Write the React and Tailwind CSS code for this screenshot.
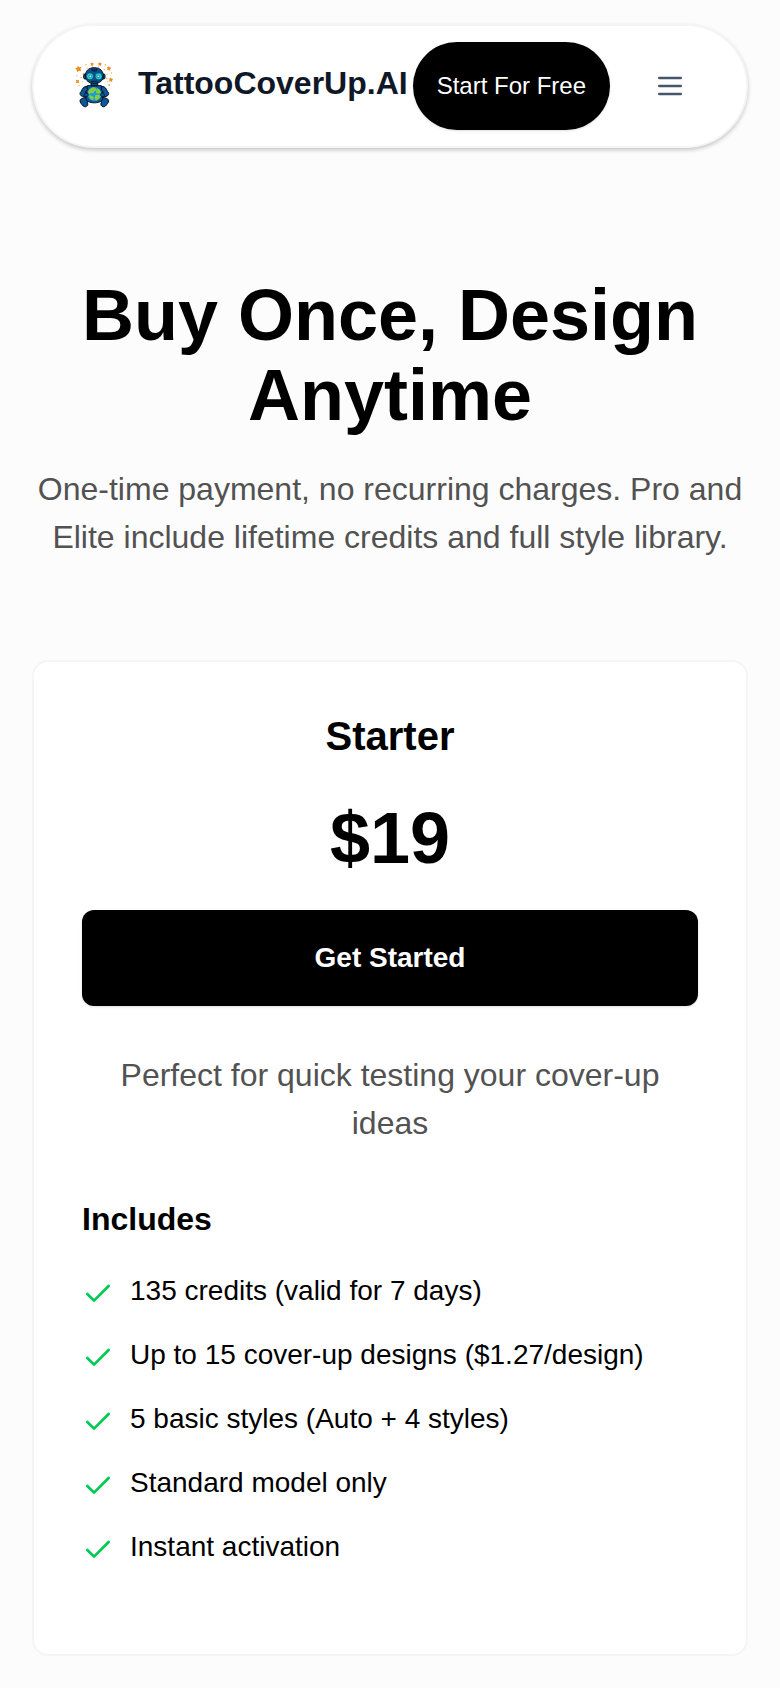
import { Check } from "lucide-react";

const FEATURES = [
    "135 credits (valid for 7 days)",
    "Up to 15 cover-up designs ($1.27/design)",
    "5 basic styles (Auto + 4 styles)",
    "Standard model only",
    "Instant activation",
];

const Logo = () => (
    <svg width="56" height="56" viewBox="3 9 168 168" aria-hidden="true" className="shrink-0">
        {/* sparks */}
        <g fill="#f08a1d">
            <path d="M38 32l5 5 7-1-4 6 3 7-7-2-6 4-1-7-5-5 7-1z" />
            <path d="M80 22l3 3 4 1-3 3 1 4-4-2-4 1 1-4-2-3 4-1z" />
            <path d="M105 21l2 4 4 1-3 3-1 5-3-4-5 1 2-4-2-3 4 0z" />
            <path d="M131 32l3 5 5 1-4 4 1 5-5-2-5 1 2-5-3-4 5-1z" />
            <path d="M137 67l3 4 5 1-4 4 1 5-5-2-5 1 2-5-3-4 5-1z" />
            <path d="M32 74l5 2 5-2-1 5 2 5-5-1-5 1 1-5z" />
        </g>
        <g fill="#f7b267">
            <path d="M53 54h4v5h-4zM61 27h4v4h-4zM65 38h3v4h-3zM47 66h4v4h-4zM34 60h3v4h-3zM50 78h3v3h-3zM40 90h4v4h-4z" />
            <path d="M119 28h4v4h-4zM116 42h4v4h-4zM124 56h4v4h-4zM138 52h3v4h-3zM123 68h4v5h-4zM127 78h3v3h-3zM130 88h5v5h-5z" />
        </g>
        {/* antennae */}
        <path d="M81 31l3 9M103 31l-4 9" stroke="#e5a564" strokeWidth="2" />
        {/* legs */}
        <g fill="#0d589a" stroke="#05101c" strokeWidth="3">
            <path d="M68 129c-8-3-16 0-22 5-3 4 1 10 5 15 4 6 10 8 14 5 5-4 4-9 1-13l8-6z" />
            <path d="M108 129c8-3 16 0 22 5 3 4-1 10-5 15-4 6-10 8-14 5-5-4-4-9-1-13l-8-6z" />
        </g>
        {/* torso and arms */}
        <g fill="#0d589a" stroke="#05101c" strokeWidth="3">
            <path d="M67 92h42l7 20-4 24c-12 10-36 10-48 0l-4-24z" />
            <path d="M66 94c-11 0-14 8-17 15-5 3-5 10-1 13 6 3 13 5 18 3l6-9-11-4 6-8z" />
            <path d="M110 94c11 0 14 8 17 15 5 3 5 10 1 13-6 3-13 5-18 3l-6-9 11-4-6-8z" />
        </g>
        {/* globe */}
        <circle cx="88" cy="117" r="21" fill="#1a9bdc" />
        <path
            d="M73 103l11-6 8 2 4 6-8 4-3 6-7-1-4 4-5-6zM97 100l8 6 3 9-9 1-7-3 2-6zM71 120l11 3 5 5-3 7-8-3zM91 120l12-1 4 4-5 9-9 5-4-7z"
            fill="#86cc3e"
        />
        <g fill="#0d589a" stroke="#05101c" strokeWidth="2">
            <path d="M60 114l8 1 2 6-6 4-7-3z" />
            <path d="M116 114l-8 1-2 6 6 4 7-3z" />
        </g>
        {/* head */}
        <g fill="#0d4f8c" stroke="#05101c" strokeWidth="3">
            <path d="M78 83h20v9H78z" />
            <rect x="56" y="57" width="9" height="15" rx="4" />
            <rect x="111" y="57" width="9" height="15" rx="4" />
            <path d="M88 38c19 0 27 12 27 25 0 14-11 22-27 22s-27-8-27-22c0-13 8-25 27-25z" />
        </g>
        <path d="M80 41l2 7h12l2-7" fill="#073561" stroke="#05101c" strokeWidth="2" />
        <path d="M79 79h18" stroke="#05101c" strokeWidth="2" />
        <g fill="#1fd6e4" stroke="#05101c" strokeWidth="1">
            <circle cx="75" cy="64" r="10" />
            <circle cx="101" cy="64" r="10" />
        </g>
        <g fill="#c9fbfb" stroke="#07566e" strokeWidth="2">
            <circle cx="76" cy="64" r="4" />
            <circle cx="100" cy="64" r="4" />
        </g>
    </svg>
);

const Header = () => {
    return (
        <header className="flex items-center justify-between rounded-full border-2 border-neutral-100 bg-white px-8 py-4 shadow-[0_2px_4px_rgba(0,0,0,0.22)]">
            <a href="/" className="flex items-center gap-4">
                <Logo />
                <span className="pb-1.5 text-[32px] leading-10 font-bold whitespace-nowrap text-gray-900">TattooCoverUp.AI</span>
            </a>

            <div className="flex items-center gap-4">
                <button className="h-[88px] rounded-full bg-black px-6 text-2xl whitespace-nowrap text-white shadow-sm">
                    Start For Free
                </button>
                <button aria-label="Open menu" className="flex size-[88px] items-center justify-center text-slate-600">
                    <svg width="32" height="32" viewBox="0 0 24 24" fill="none" stroke="currentColor" strokeWidth="2" strokeLinecap="round">
                        <path d="M4 6h16M4 12h16M4 18h16" />
                    </svg>
                </button>
            </div>
        </header>
    );
};

const PlanCard = () => {
    return (
        <section className="rounded-2xl border-2 border-neutral-100 bg-white p-12">
            <h2 className="text-center text-[40px] leading-13 font-bold">Starter</h2>
            <p className="mt-9 text-center text-7xl leading-20 font-bold">$19</p>
            <button className="mt-8 h-24 w-full rounded-xl bg-black text-[28px] font-bold text-white shadow-sm">
                Get Started
            </button>
            <p className="mt-[45px] text-center text-[32px] leading-12 text-neutral-600">
                Perfect for quick testing your cover-up ideas
            </p>
            <h3 className="mt-12 text-[32px] leading-12 font-bold">Includes</h3>
            <ul className="mt-7 flex flex-col gap-6 pb-[39px]">
                {FEATURES.map((feature) => (
                    <li key={feature} className="flex items-start gap-4 text-[28px] leading-10">
                        <Check size={32} className="mt-[7px] shrink-0 text-green-500" />
                        {feature}
                    </li>
                ))}
            </ul>
        </section>
    );
};

const App = () => {
    return (
        <div className="min-h-screen bg-[#fcfcfc] px-8 pt-6 pb-8 font-['Liberation_Sans',Arial,sans-serif] text-black">
            <Header />
            <main>
                <div className="pt-[127px] pb-[99px] text-center">
                    <h1 className="text-7xl leading-20 font-bold">Buy Once, Design Anytime</h1>
                    <p className="mt-[30px] text-[32px] leading-12 text-neutral-600">
                        One-time payment, no recurring charges. Pro and Elite include lifetime credits and full style library.
                    </p>
                </div>
                <PlanCard />
            </main>
        </div>
    );
};

export default App;
